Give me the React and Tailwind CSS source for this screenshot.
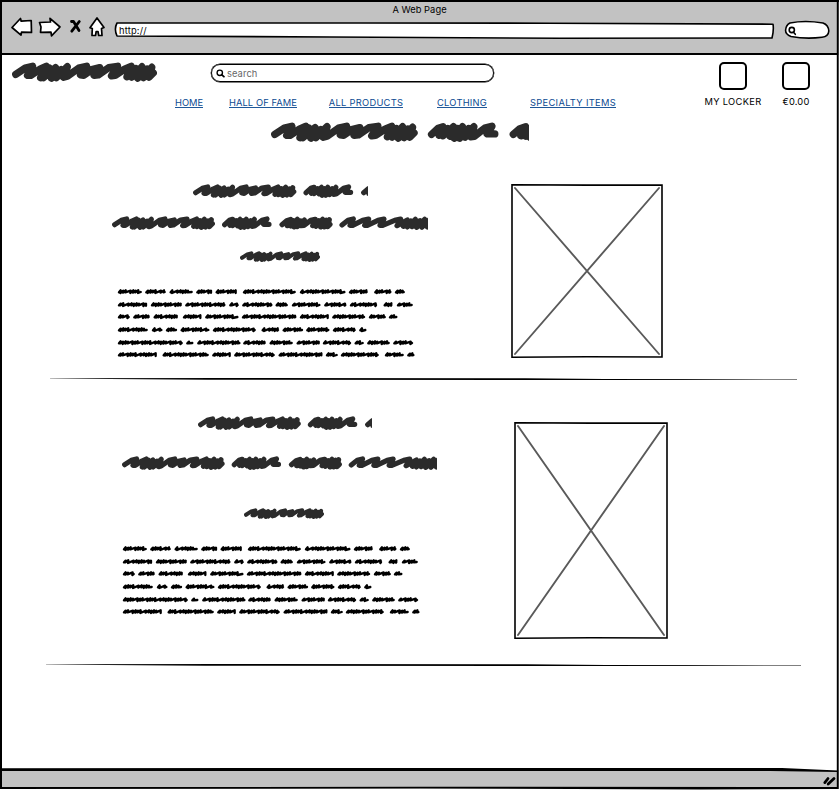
const HEADLINE =
  "M8 26L28 13L44 9L33 28L40 28L60 15L73 9L61 33L80 13L67 33L93 12L84 34L105 16L94 33L118 10L110 32L118 30L142 13L159 9L146 27L153 28L170 16L187 12L175 28L184 27L206 12L225 9L212 29L220 28L240 15L254 9L245 31L264 14L255 32L277 10L268 34L288 15L280 33L298 11L292 32L301 23 M338 26L352 13L362 10L354 28L372 14L362 29L384 10L377 30L393 14L386 34L403 10L397 34L416 14L408 32L427 10L420 31L428 30L450 13L465 9L455 25L471 25 M510 26L524 14L536 10L526 29L544 14L536 30L556 10L546 33L566 15L556 32L577 12L567 29L576 28L596 13L610 10L602 29L620 14L612 31L632 10L626 33L643 13L637 33L652 11L647 32L654 25 M690 27L708 13L724 9L714 28L722 28L752 13L770 9L758 28L766 28L798 13L816 9L804 28L812 28L848 13L866 9L855 29L886 12L874 31L896 15L886 33L910 10L900 32L924 14L914 34L938 10L930 34L952 11L946 33";

const PARAGRAPH = [
  [11, [[24, 96], [106, 168], [179, 249], [259, 307], [317, 381], [399, 558], [570, 707], [717, 774], [793, 845], [855, 885]]],
  [50, [[24, 112], [123, 216], [226, 347], [358, 387], [397, 488], [497, 534], [546, 632], [643, 710], [720, 802], [821, 848], [861, 909]]],
  [86, [[24, 60], [70, 120], [131, 204], [219, 275], [286, 386], [396, 560], [570, 657], [667, 766], [777, 828], [837, 863]]],
  [125, [[24, 114], [126, 158], [168, 202], [212, 299], [309, 438], [455, 508], [518, 580], [589, 659], [669, 738], [748, 770]]],
  [164, [[24, 219], [229, 251], [262, 392], [400, 468], [479, 549], [560, 630], [639, 724], [734, 762], [772, 840], [850, 910]]],
  [200, [[24, 141], [158, 297], [307, 363], [373, 495], [506, 638], [648, 684], [693, 807], [825, 882], [892, 914]]],
];

const STEPS = [8, 7, 15, 8, 7, 8, 16, 9, 7, 8, 7, 14];

function squiggle(y, from, to, seed) {
  const a = from - 18;
  const b = to - 25;
  let d = `M${a} ${y + 2}`;
  let x = a;
  let i = seed;
  while (x < b - 3) {
    const top = y - 4 + (i % 2);
    const step = STEPS[i % STEPS.length];
    d += `L${Math.min(b, x + 5)} ${top}L${Math.min(b, x + 4)} ${y + 4 - (i % 3)}`;
    x = Math.min(b, x + step);
    i += 1;
  }
  return d + `L${b} ${y + 1}`;
}

const PARAGRAPH_PATH = PARAGRAPH.map(([y, words], row) =>
  words.map(([a, b], n) => squiggle(y, a, b, row * 5 + n * 3)).join("")
).join("");

function Scribble({ span, className }) {
  return (
    <svg viewBox={`0 0 ${span} 42`} preserveAspectRatio="none" className={`block shrink-0 overflow-hidden ${className}`}>
      <path d={HEADLINE} fill="none" stroke="#2b2b2b" strokeWidth="15.5" strokeLinecap="round" strokeLinejoin="round" />
    </svg>
  );
}

function Paragraph({ className }) {
  return (
    <svg viewBox="0 0 894 216" className={`block h-[72px] w-[298px] ${className}`}>
      <path d={PARAGRAPH_PATH} fill="none" stroke="#000" strokeWidth="7" strokeLinecap="round" strokeLinejoin="round" />
    </svg>
  );
}

function Picture({ w, h, className }) {
  return (
    <svg width={w} height={h} viewBox={`0 0 ${w} ${h}`} className={`block shrink-0 ${className}`}>
      <path d={`M4 4L${w - 4} ${h - 4}M${w - 4} 4L4 ${h - 4}`} stroke="#5a5a5a" strokeWidth="1.9" strokeLinecap="round" />
      <path d={`M1 .8L${w / 2} 1.1L${w - 1} 1L${w - 1} ${h - 1}L${w / 2} ${h - 1.2}L1 ${h - 0.8}Z`} fill="none" stroke="#000" strokeWidth="1.6" />
    </svg>
  );
}

function Rule({ className }) {
  return (
    <svg viewBox="0 0 755 4" preserveAspectRatio="none" className={`block h-1 shrink-0 ${className}`}>
      <path d="M0 .3L180 0L480 .2L560 1L755 1.3L755 1.7L640 2L480 2L160 1.8L60 1L0 .6Z" fill="#000" />
    </svg>
  );
}

function Glass({ className }) {
  return (
    <svg viewBox="0 0 10 10" className={`block shrink-0 ${className}`} fill="none" stroke="#000" strokeWidth="1.5" strokeLinecap="round">
      <circle cx="4.2" cy="4.2" r="3" />
      <path d="M6.4 6.4L8.8 8.6" strokeWidth="1.9" />
    </svg>
  );
}

function NavLink({ children, className }) {
  return (
    <a href="#" className={`flex h-[11px] shrink-0 justify-center whitespace-nowrap border-b border-[#1e5799] text-[9.3px] leading-[11px] text-[#0b4a91] ${className}`}>
      {children}
    </a>
  );
}

function Tile({ label, className }) {
  return (
    <div className={`flex shrink-0 flex-col items-center ${className}`}>
      <div className="h-7 w-7 rounded-[5px] border-2 border-black" />
      <span className="mt-[6px] whitespace-nowrap text-[9.3px] leading-[12px] text-black">{label}</span>
    </div>
  );
}

function BrowserBar() {
  return (
    <header className="h-[55px] shrink-0 bg-[#c2c2c2]">
      <div className="flex h-[18px] justify-center pt-[3px] text-[9.3px] leading-[13px] tracking-[0.05px] text-black">A Web Page</div>
      <div className="flex h-[24px] pl-[10px]">
        <svg viewBox="10 14 98 24" className="mt-[-4px] block h-6 w-[98px] shrink-0" fill="#fff" stroke="#000" strokeWidth="1.7" strokeLinejoin="round">
          <path d="M12 27.5L20.5 18.5L21.2 21.2L31.2 20.5L31.5 32.4L21.5 32.2L21 35.2Z" />
          <path d="M39.5 22.5L50.5 22L50 18.3L60 27L51.5 35.8L51 32.2L40.5 32.3L41 27Z" />
          <path d="M71.5 21.5L73.5 21.5L79 30.5M79.3 21.5L71.8 31.2" strokeWidth="2.8" strokeLinecap="round" />
          <path d="M97 18L104 27.5L101.5 28.5L102 35.5L98.7 35.5L98 31.5L96.2 31.5L95.5 35.5L92 35.5L92.3 28.5L90 27.7Z" />
        </svg>
        <div className="ml-[6px] grid h-[22px] w-[662px] shrink-0">
          <svg viewBox="114 18 662 22" className="col-start-1 row-start-1 block h-[22px] w-[662px]" fill="#fff" stroke="#000" strokeWidth="1.6" strokeLinejoin="round">
            <path d="M117 23L360 23L550 23.2L773 24.2Q774 30 772 38L560 38.2L330 37L117 36Q113.8 29 117 23Z" />
          </svg>
          <span className="col-start-1 row-start-1 pl-[5px] pt-[6px] text-[9.3px] leading-[13px] tracking-[0.2px] text-black">http://</span>
        </div>
        <svg viewBox="783 18 48 22" className="ml-[7px] block h-[22px] w-[48px] shrink-0" fill="none" stroke="#000" strokeWidth="1.6" strokeLinecap="round" strokeLinejoin="round">
          <path d="M790 23Q805 20 823 23Q828.5 25 828.8 31Q828.5 36.5 822 37.3Q806 39.3 791 36.5Q785.3 34 785.6 30Q786 25 790 23Z" fill="#fff" />
          <circle cx="791.8" cy="30" r="2.6" />
          <path d="M793.5 32.3L795.3 34.3" />
        </svg>
      </div>
    </header>
  );
}

export default function App() {
  return (
    <div className="relative flex h-[790px] w-[839px] flex-col overflow-hidden bg-white font-[Inter,'Open_Sans',sans-serif]">
      <BrowserBar />

      <div className="flex h-[121px] shrink-0">
        <div className="w-[704px] shrink-0">
          <div className="flex h-[42px]">
            <Scribble span={309} className="ml-3 mt-[7px] h-5 w-[145px]" />
            <div className="ml-[54px] mt-[9px] flex h-[18px] w-[283px] items-center rounded-full border-[1.5px] border-black pl-[4px] shadow-[0_0_0_0.4px_#000]">
              <Glass className="h-[9px] w-[9px]" />
              <span className="ml-[2px] text-[9.3px] leading-[13px] tracking-[0.1px] text-[#666]">search</span>
            </div>
          </div>
          <nav className="flex pl-[175px]">
            <NavLink className="w-[28px]">HOME</NavLink>
            <NavLink className="ml-[26px] w-[68px] tracking-[0.12px]">HALL OF FAME</NavLink>
            <NavLink className="ml-[32px] w-[74px] tracking-[0.3px]">ALL PRODUCTS</NavLink>
            <NavLink className="ml-[34px] w-[50px] tracking-[0.25px]">CLOTHING</NavLink>
            <NavLink className="ml-[43px] w-[86px] tracking-[0.32px]">SPECIALTY ITEMS</NavLink>
          </nav>
          <Scribble span={543} className="ml-[271px] mt-[14px] h-5 w-[258px]" />
        </div>
        <div className="flex pt-[7px]">
          <Tile label="MY LOCKER" className="w-[58px] tracking-[0.35px]" />
          <Tile label="€0.00" className="ml-[20px] w-[28px] tracking-[0.2px]" />
        </div>
      </div>

      <section className="flex h-[202px] shrink-0">
        <div className="w-[511px] shrink-0">
          <Scribble span={523} className="ml-[193px] mt-[8px] h-[14px] w-[175px]" />
          <Scribble span={948} className="ml-[112px] mt-[18px] h-[14px] w-[316px]" />
          <Scribble span={309} className="ml-[240px] mt-[21px] h-[11px] w-[80px]" />
          <Paragraph className="ml-[117px] mt-[26px]" />
        </div>
        <Picture w={152} h={174} className="mt-[8px]" />
      </section>
      <Rule className="ml-[50px] w-[747px]" />

      <section className="flex h-[282px] shrink-0">
        <div className="w-[514px] shrink-0">
          <Scribble span={523} className="ml-[198px] mt-[34px] h-[14px] w-[174px]" />
          <Scribble span={948} className="ml-[122px] mt-[26px] h-[14px] w-[315px]" />
          <Scribble span={309} className="ml-[244px] mt-[38px] h-[11px] w-[80px]" />
          <Paragraph className="ml-[122px] mt-[26px]" />
        </div>
        <Picture w={154} h={217} className="mt-[40px]" />
      </section>
      <Rule className="ml-[46px] w-[755px]" />

      <footer className="mt-auto flex h-[20px] shrink-0 justify-end bg-[#c2c2c2]">
        <svg viewBox="0 0 14 12" className="mr-[3px] mt-[4px] block h-3 w-[14px]" stroke="#000" strokeWidth="2.8" strokeLinecap="round">
          <path d="M2.8 8.6L6 4.5M6.2 10L12 4.6" />
        </svg>
      </footer>

      <svg viewBox="0 0 839 790" className="pointer-events-none absolute inset-0 h-full w-full">
        <path d="M0 788.5H839V790H0Z" fill="#fff" />
        <path d="M780 767L838 767L838 771.5Z" fill="#fff" />
        <path d="M0 0H839V2H0ZM0 0H2V789H0ZM836.8 0H838.7V789H836.8Z" fill="#000" />
        <path d="M0 53H838V55H0ZM2 768.2L400 768L782 768L838 770.6V772L770 771L2 771ZM0 787L420 786.8L838 787V789L700 789.4L420 788.6L0 789Z" fill="#000" />
      </svg>
    </div>
  );
}
